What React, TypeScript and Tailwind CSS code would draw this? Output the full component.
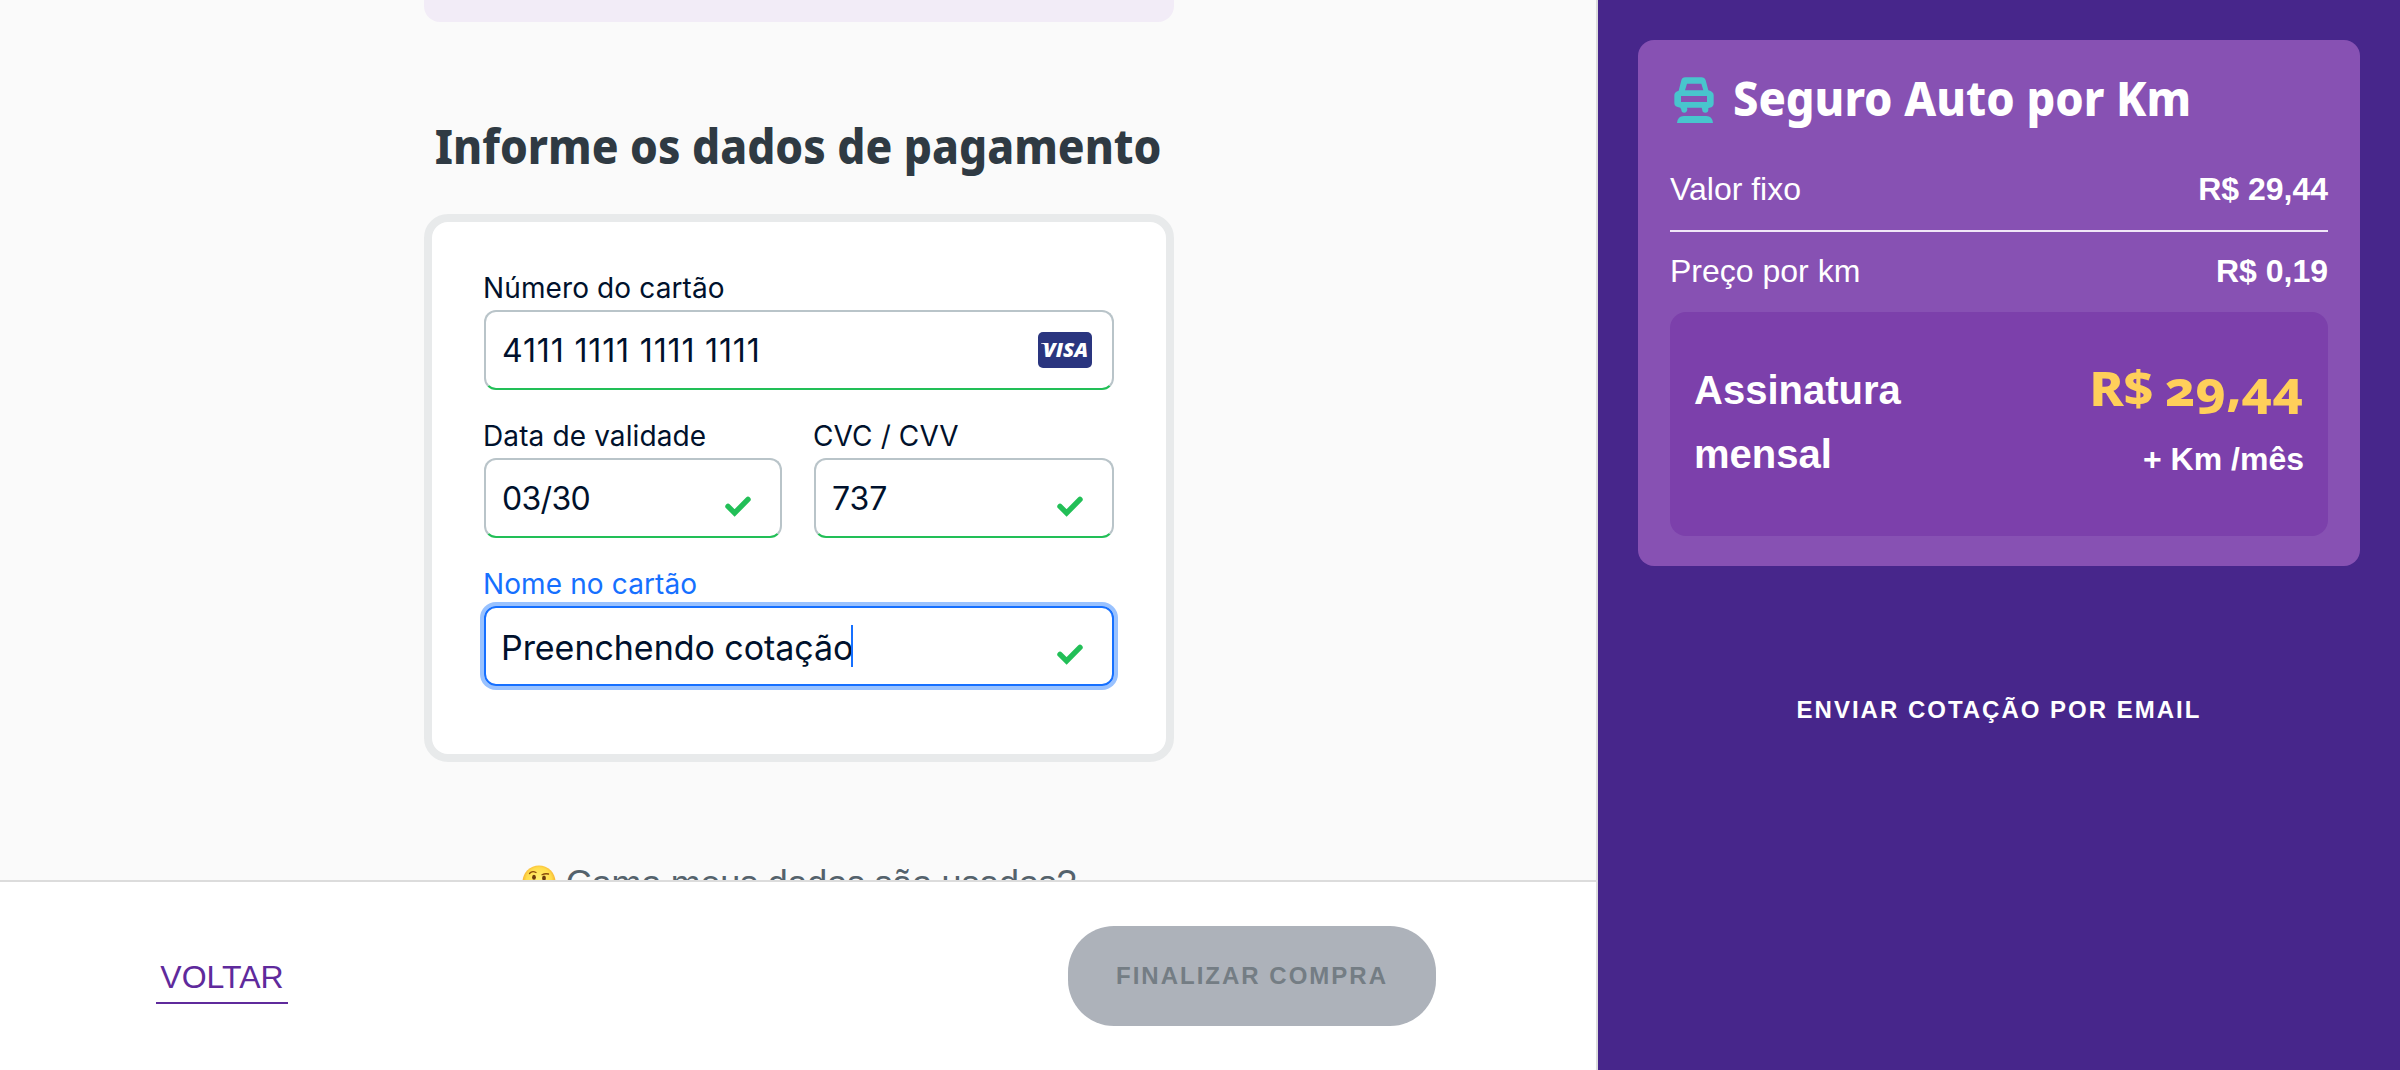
import React from "react";

function CheckMark() {
  return (
    <svg width="28" height="22" viewBox="0 0 28 22" fill="none" className="relative top-[9px] shrink-0">
      <path d="M4 10.4 L10.6 17 L24 3.4" stroke="#22bf57" strokeWidth="5.4" strokeLinecap="round" />
    </svg>
  );
}

function VisaBadge() {
  return (
    <svg width="54" height="36" viewBox="0 0 54 36" className="shrink-0">
      <rect width="54" height="36" rx="5" fill="#2a357f" />
      <path d="M3 11 H8.5 L10.6 17.5 C9 13.8 6.5 12 3 11.6 Z" fill="#fff" />
      <text
        x="5"
        y="25.4"
        textLength="45"
        lengthAdjust="spacingAndGlyphs"
        className="fill-white text-[20px] font-extrabold italic [font-family:'Open_Sans',sans-serif]"
      >
        VISA
      </text>
    </svg>
  );
}

function CarIcon() {
  return (
    <svg width="40" height="46" viewBox="42 51 120 138" fill="#48c5cd" fillRule="evenodd" className="shrink-0">
      <path d="M76 52 H124 Q134 52 137 61 L145 91 Q161 95 161 106 V130 Q161 142 149 143 L145 144 V149 Q145 158 136 158 Q127 158 127 151 L125 143 H81 L82 149 Q80 158 73 158 Q64 158 64 149 L61 143 Q43 141 43 130 V106 Q43 95 56 92 L64 61 Q66 52 76 52 Z M81 71 L75 91 H130 L124 71 Z M63 108 V126 H141 V108 Z" />
      <path d="M51 189 Q53 168 71 168 H139 Q157 168 159 189 Z" />
    </svg>
  );
}

function ThinkingFace() {
  return (
    <svg width="34" height="34" viewBox="0 0 34 34" className="shrink-0">
      <defs>
        <radialGradient id="face" cx="0.5" cy="0.45" r="0.55">
          <stop offset="0" stopColor="#fff27a" />
          <stop offset="0.7" stopColor="#ffdc4a" />
          <stop offset="1" stopColor="#f3a12b" />
        </radialGradient>
      </defs>
      <circle cx="17" cy="17" r="16.5" fill="url(#face)" />
      <path d="M7.5 8.5 Q10 5.5 14 7.5 M20 9.8 Q23 8.2 26.5 9" fill="none" stroke="#8a4b0c" strokeWidth="1.3" strokeLinecap="round" />
      <ellipse cx="12" cy="12.2" rx="1.9" ry="2.5" fill="#6b3a0c" />
      <ellipse cx="22" cy="13" rx="1.9" ry="2.5" fill="#6b3a0c" />
      <path d="M13 22 Q17 20 22 23" fill="none" stroke="#6b3a0c" strokeWidth="1.5" />
    </svg>
  );
}

type FieldProps = {
  label: string;
  children: React.ReactNode;
  adornment: React.ReactNode;
  focused?: boolean;
};

function Field({ label, children, adornment, focused = false }: FieldProps) {
  return (
    <div className="min-w-0">
      <div
        className={
          focused
            ? "-ml-px mb-1.5 whitespace-nowrap text-[28px] leading-8 tracking-[0.12px] text-[#1670ff]"
            : "-ml-px mb-1.5 whitespace-nowrap text-[28px] leading-8 tracking-[0.12px] text-[#00112c]"
        }
      >
        {label}
      </div>
      <div
        className={
          focused
            ? "flex h-20 items-center justify-between rounded-[12px] border-2 border-[#1670ff] pl-[15px] text-[#00112c] ring-4 ring-[#99c2ff]"
            : "flex h-20 items-center justify-between rounded-[12px] border-2 border-[#b9c4c9] border-b-[#22bf57] pl-4 text-[#00112c]"
        }
      >
        {children}
        {adornment}
      </div>
    </div>
  );
}

function Checkout() {
  return (
    <main className="flex w-[1598px] shrink-0 flex-col border-r-2 border-[#dcdcdc] bg-[#fafafa]">
      <div className="flex h-[880px] flex-col items-center overflow-hidden pl-0.5">
        <div className="h-[22px] w-[750px] shrink-0 rounded-b-[16px] bg-[#f2ecf7]" />
        <h1 className="mt-[92px] shrink-0 scale-x-[0.922] whitespace-nowrap pr-0.5 text-[48px] font-extrabold leading-[64px] text-[#2f3a43] [font-family:'Noto_Sans',sans-serif]">
          Informe os dados de pagamento
        </h1>
        <section className="mt-[36px] flex h-[548px] w-[750px] shrink-0 flex-col gap-[30px] rounded-[24px] border-8 border-[#e8eaeb] bg-white px-[52px] pt-[50px] [font-family:Inter,sans-serif]">
          <Field label="Número do cartão" adornment={<div className="mr-5"><VisaBadge /></div>}>
            <span className="pt-0.5 text-[32px] leading-10 tracking-[0.86px]">4111 1111 1111 1111</span>
          </Field>
          <div className="grid grid-cols-[298px_300px] gap-8">
            <Field label="Data de validade" adornment={<div className="mr-7"><CheckMark /></div>}>
              <span className="pt-0.5 text-[32px] leading-10 tracking-[-0.7px]">03/30</span>
            </Field>
            <Field label="CVC / CVV" adornment={<div className="mr-7"><CheckMark /></div>}>
              <span className="pt-0.5 text-[32px] leading-10">737</span>
            </Field>
          </div>
          <Field focused label="Nome no cartão" adornment={<div className="mr-7"><CheckMark /></div>}>
            <div className="flex items-center">
              <span className="pt-[3px] text-[34px] leading-10 tracking-[-0.05px]">Preenchendo cotação</span>
              <span className="-ml-0.5 h-[42px] w-0.5 bg-[#1670ff]" />
            </div>
          </Field>
        </section>
        <div className="mt-[102px] flex h-10 shrink-0 items-start gap-[10px] whitespace-nowrap text-[36px] leading-10 tracking-[-0.22px] text-[#54626c]">
          <div className="pt-px">
            <ThinkingFace />
          </div>
          <span>Como meus dados são usados?</span>
        </div>
      </div>
      <footer className="flex h-[190px] items-start justify-between border-t-2 border-[#dcdcdc] bg-white pl-[156px] pr-[160px]">
        <a className="mt-[77px] w-[132px] border-b-2 border-[#5f2a9c] pb-[7px] text-center text-[32px] leading-9 text-[#5f2a9c]">
          VOLTAR
        </a>
        <button className="mt-11 h-[100px] w-[368px] rounded-[46px] bg-[#adb2ba] text-[24px] font-bold tracking-[2px] text-[#747d84]">
          FINALIZAR COMPRA
        </button>
      </footer>
    </main>
  );
}

function Summary() {
  return (
    <aside className="flex flex-1 flex-col bg-[#47268b] pl-10 pr-10 pt-10 text-white">
      <section className="h-[526px] rounded-[16px] bg-[#8751b3] px-8 pt-[26px]">
        <div className="flex h-16 items-center pl-1">
          <div className="pt-1">
            <CarIcon />
          </div>
          <h2 className="ml-[19px] origin-left scale-x-[0.941] whitespace-nowrap text-[48px] font-extrabold leading-[64px] [font-family:'Noto_Sans',sans-serif]">
            Seguro Auto por Km
          </h2>
        </div>
        <div className="mt-[35px] flex justify-between border-b-2 border-[#f1e6f8] pb-[17px] text-[32px] leading-[48px]">
          <span>Valor fixo</span>
          <strong>R$ 29,44</strong>
        </div>
        <div className="flex justify-between pb-[17px] pt-[15px] text-[32px] leading-[48px]">
          <span>Preço por km</span>
          <strong>R$ 0,19</strong>
        </div>
        <div className="flex h-[224px] justify-between rounded-[16px] bg-[#7c40ab] px-6 font-bold">
          <div className="w-[240px] pt-[46px] text-[40px] leading-[64px]">Assinatura mensal</div>
          <div className="flex flex-col items-end pt-[44px]">
            <span className="mr-px origin-right scale-x-[1.08] text-[48px] font-extrabold leading-[64px] text-[#ffcf5a] [font-family:'Noto_Sans',sans-serif] [font-variant-numeric:oldstyle-nums] [word-spacing:-2px]">
              R$ 29,44
            </span>
            <span className="mt-[7px] text-[32px] leading-[64px]">+ Km /mês</span>
          </div>
        </div>
      </section>
      <button className="mt-32 text-[24px] font-bold leading-8 tracking-[2px]">ENVIAR COTAÇÃO POR EMAIL</button>
    </aside>
  );
}

export default function App() {
  return (
    <div className="flex h-[1070px] w-[2400px] overflow-hidden [font-family:'Liberation_Sans',Arial,sans-serif]">
      <Checkout />
      <Summary />
    </div>
  );
}
